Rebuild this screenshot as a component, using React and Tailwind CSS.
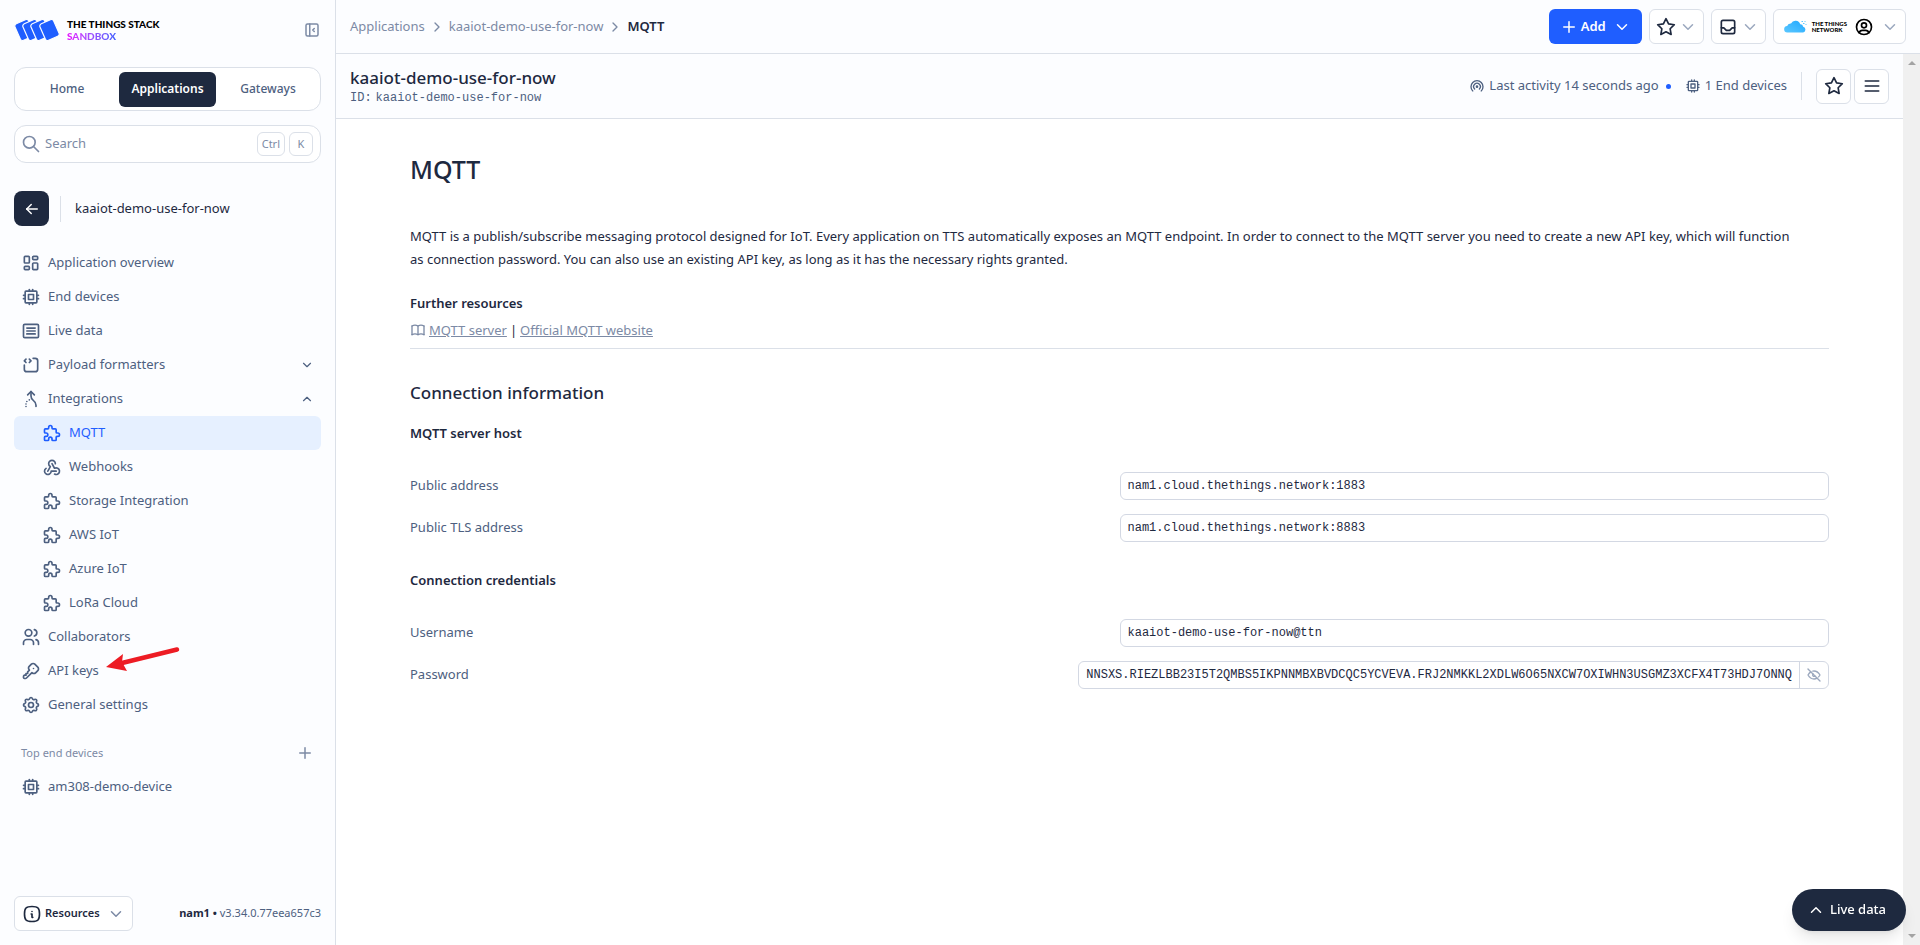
import {
  TbArrowLeft,
  TbArrowMergeAltRight,
  TbBook,
  TbBroadcast,
  TbChevronDown,
  TbChevronRight,
  TbChevronUp,
  TbCpu,
  TbEyeOff,
  TbInbox,
  TbInfoSquareRounded,
  TbKey,
  TbLayoutDashboard,
  TbLayoutSidebarLeftCollapse,
  TbMenu2,
  TbPlus,
  TbPuzzle,
  TbSearch,
  TbSettings,
  TbSourceCode,
  TbStar,
  TbUserCircle,
  TbUsers,
  TbWebhook,
} from "react-icons/tb";
import clsx from "clsx";

const integrations = [
  { label: "MQTT", icon: TbPuzzle, active: true },
  { label: "Webhooks", icon: TbWebhook },
  { label: "Storage Integration", icon: TbPuzzle },
  { label: "AWS IoT", icon: TbPuzzle },
  { label: "Azure IoT", icon: TbPuzzle },
  { label: "LoRa Cloud", icon: TbPuzzle },
];

function LiveDataIcon({ className }) {
  return (
    <svg
      viewBox="0 0 24 24"
      className={className}
      fill="none"
      stroke="currentColor"
      strokeWidth="2"
      strokeLinecap="round"
      strokeLinejoin="round"
    >
      <rect x="3" y="4" width="18" height="16" rx="1.500" />
      <path d="M7 8.500h10M7 12h10M7 15.500h10" />
    </svg>
  );
}

function StackLogo() {
  return (
    <svg viewBox="0 0 46 22" className="h-[22px] w-[46px] shrink-0">
      {[10.5, 18.5, 26.5, 35.5].map((x) => (
        <rect
          key={x}
          x={x - 7.5}
          y="2"
          width="15"
          height="18"
          rx="2.500"
          transform={`rotate(-24 ${x} 11)`}
          fill="#1f5eff"
          stroke="#fcfdff"
          strokeWidth="1.200"
        />
      ))}
    </svg>
  );
}

function NavItem({ icon: Icon, label, active, sub, expander: Expander }) {
  return (
    <a
      href="#"
      className={clsx(
        "flex h-[34px] items-center gap-[7px] rounded-md pr-[7px] text-[13px]",
        sub ? "pl-7" : "pl-[7px]",
        active ? "bg-[#e6f0ff] text-[#1f5eff]" : "text-[#4d6080]"
      )}
    >
      <Icon className="size-5 shrink-0" />
      <span className="grow">{label}</span>
      {Expander && <Expander className="size-3.5" />}
    </a>
  );
}

function SideBar() {
  return (
    <aside className="flex w-[336px] shrink-0 flex-col border-r border-[#dbe0e8] bg-[#fcfdff] px-3.5 pb-3.5">
      <div className="flex h-[55px] items-center justify-between pt-1">
        <a href="#" className="flex items-center gap-[7px]">
          <StackLogo />
          <span className="flex flex-col font-[Lato] text-[10px] leading-3 font-black text-black">
            <span>THE THINGS STACK</span>
            <span className="w-fit bg-linear-to-r from-[#e600ff] to-[#3d5eff] bg-clip-text text-transparent">
              SANDBOX
            </span>
          </span>
        </a>
        <button type="button" aria-label="Collapse sidebar" className="text-[#7c8aa5]">
          <TbLayoutSidebarLeftCollapse className="size-[18px]" />
        </button>
      </div>

      <nav className="mt-3 flex h-11 items-center rounded-xl border border-[#dbe0e8] bg-white text-xs font-medium text-[#4d6080]">
        <a href="#" className="flex-1 text-center">
          Home
        </a>
        <a
          href="#"
          className="flex h-[35px] w-[97px] items-center justify-center rounded-md bg-[#1e293f] font-semibold text-white"
        >
          Applications
        </a>
        <a href="#" className="flex-1 text-center">
          Gateways
        </a>
      </nav>

      <label className="mt-3.5 flex h-[38px] items-center gap-1 rounded-xl border border-[#dbe0e8] bg-white pr-[7px] pl-1.5 text-[#7c8aa5]">
        <TbSearch className="size-5 shrink-0" />
        <input
          type="text"
          placeholder="Search"
          className="w-full min-w-0 bg-transparent text-[13px] outline-none placeholder:text-[#7c8aa5]"
        />
        <kbd className="flex h-6 shrink-0 items-center rounded-md border border-[#dbe0e8] px-1 font-[inherit] text-[11px]">
          Ctrl
        </kbd>
        <kbd className="flex size-6 shrink-0 items-center justify-center rounded-md border border-[#dbe0e8] font-[inherit] text-[11px]">
          K
        </kbd>
      </label>

      <div className="mt-7 mb-5 flex items-center">
        <button
          type="button"
          aria-label="Back"
          className="flex size-[35px] items-center justify-center rounded-lg bg-[#1e293f] text-white"
        >
          <TbArrowLeft className="size-[18px]" />
        </button>
        <span className="mr-3.5 ml-[11px] h-[26px] w-px bg-[#dbe0e8]" />
        <span className="text-[13px] text-[#1e293f]">kaaiot-demo-use-for-now</span>
      </div>

      <nav>
        <NavItem icon={TbLayoutDashboard} label="Application overview" />
        <NavItem icon={TbCpu} label="End devices" />
        <NavItem icon={LiveDataIcon} label="Live data" />
        <NavItem icon={TbSourceCode} label="Payload formatters" expander={TbChevronDown} />
        <NavItem icon={TbArrowMergeAltRight} label="Integrations" expander={TbChevronUp} />
        {integrations.map((item) => (
          <NavItem key={item.label} sub {...item} />
        ))}
        <NavItem icon={TbUsers} label="Collaborators" />
        <div className="relative">
          <NavItem icon={TbKey} label="API keys" />
          {/* pointer to the API keys entry */}
          <svg viewBox="0 0 74 26" className="absolute -top-2 left-[92px] h-[26px] w-[74px]">
            <path d="M71 3.500L16 17" stroke="#ed1c24" strokeWidth="4.500" strokeLinecap="round" />
            <path d="M0 21L17 8L16 16L21 25Z" fill="#ed1c24" />
          </svg>
        </div>
        <NavItem icon={TbSettings} label="General settings" />
      </nav>

      <div className="mt-3.5 flex h-[34px] items-center justify-between px-[7px] text-[#7c8aa5]">
        <span className="text-[11px]">Top end devices</span>
        <button type="button" aria-label="Add end device">
          <TbPlus className="size-[18px]" />
        </button>
      </div>
      <NavItem icon={TbCpu} label="am308-demo-device" />

      <div className="mt-auto flex items-center justify-between text-[11px]">
        <button
          type="button"
          className="flex h-[35px] items-center gap-[3px] rounded-md border border-[#dbe0e8] bg-white px-[7px] font-semibold text-[#1e293f]"
        >
          <TbInfoSquareRounded className="size-5" />
          Resources
          <TbChevronDown className="ml-1 size-[18px] text-[#7c8aa5]" />
        </button>
        <span className="text-[#4d6080]">
          <b className="text-[#1e293f]">nam1 • </b>v3.34.0.77eea657c3
        </span>
      </div>
    </aside>
  );
}

function NetworkLogo() {
  return (
    <span className="flex items-center gap-[5px]">
      <svg viewBox="0 0 23 13" className="h-[13px] w-[23px]">
        <defs>
          <linearGradient id="cloud" x1="0" y1="1" x2="1" y2="0">
            <stop offset="0" stopColor="#5cc8ff" />
            <stop offset="1" stopColor="#1fa8ff" />
          </linearGradient>
        </defs>
        <path
          d="M3.500 12.500a3.200 3.200 0 0 1 -.3 -6.400a3.500 3.500 0 0 1 3.800 -2.600a5 5 0 0 1 9.200 .8a3 3 0 0 1 3 2.400a3 3 0 0 1 0 5.800z"
          fill="url(#cloud)"
        />
        <path d="M17.500 1.500h1.500M20.500 1.500h1M19 3.500h1.500M21.500 4.500h1" stroke="#5cc8ff" />
      </svg>
      <span className="flex flex-col text-left font-[Lato] text-[6px] leading-[6px] font-black text-black">
        <span>THE THINGS</span>
        <span>NETWORK</span>
      </span>
    </span>
  );
}

function TopBar() {
  const button =
    "flex h-[35px] items-center gap-[3px] rounded-md border border-[#dbe0e8] bg-white px-1.5 text-[#1e293f]";
  return (
    <header className="flex h-[54px] shrink-0 items-center justify-between border-b border-[#dbe0e8] bg-[#fcfdff] px-3.5">
      <nav className="flex items-center gap-1 text-[13px] text-[#7c8aa5]">
        <a href="#">Applications</a>
        <TbChevronRight className="size-4" />
        <a href="#">kaaiot-demo-use-for-now</a>
        <TbChevronRight className="size-4" />
        <span className="font-semibold text-[#1e293f]">MQTT</span>
      </nav>
      <div className="flex gap-[7px]">
        <button
          type="button"
          className="flex h-[35px] items-center gap-[3px] rounded-md bg-[#1f5eff] px-[11px] text-[13px] font-semibold text-white"
        >
          <TbPlus className="size-[18px]" />
          Add
          <TbChevronDown className="ml-1 size-[18px]" />
        </button>
        <button type="button" aria-label="Bookmarks" className={button}>
          <TbStar className="size-5" />
          <TbChevronDown className="size-[18px] text-[#9ba8be]" />
        </button>
        <button type="button" aria-label="Notifications" className={button}>
          <TbInbox className="size-5" />
          <TbChevronDown className="size-[18px] text-[#9ba8be]" />
        </button>
        <button
          type="button"
          aria-label="Profile"
          className="flex h-[35px] items-center gap-[7px] rounded-md border border-[#dbe0e8] bg-white pr-1.5 pl-2.5"
        >
          <NetworkLogo />
          <TbUserCircle className="size-5 text-black" />
          <TbChevronDown className="size-[18px] text-[#9ba8be]" />
        </button>
      </div>
    </header>
  );
}

function EntityHeader() {
  const button =
    "flex size-[35px] items-center justify-center rounded-md border border-[#dbe0e8] bg-white text-[#1e293f]";
  return (
    <div className="flex h-[65px] items-center justify-between border-b border-[#dbe0e8] bg-[#fcfdff] px-3.5">
      <div>
        <h2 className="text-[17px] leading-6 font-medium text-[#1e293f]">
          kaaiot-demo-use-for-now
        </h2>
        <p className="font-['Liberation_Mono',monospace] text-xs text-[#4d6080]">
          <span className="mr-1">ID:</span>
          kaaiot-demo-use-for-now
        </p>
      </div>
      <div className="flex items-center text-[13px] text-[#4d6080]">
        <TbBroadcast className="mr-1 size-4" />
        Last activity 14 seconds ago
        <span className="mr-3.5 ml-[7px] size-[5px] rounded-full bg-[#1f5eff]" />
        <TbCpu className="mr-1 size-4" />1 End devices
        <span className="mx-3.5 h-7 w-px bg-[#dbe0e8]" />
        <div className="flex gap-[3px]">
          <button type="button" aria-label="Bookmark" className={button}>
            <TbStar className="size-5" />
          </button>
          <button type="button" aria-label="Menu" className={button}>
            <TbMenu2 className="size-5" />
          </button>
        </div>
      </div>
    </div>
  );
}

function Field({ id, label, value, hidable }) {
  return (
    <div className="flex h-[42px] items-center justify-between text-[#4d6080]">
      <label htmlFor={id}>{label}</label>
      <div className="flex h-7 w-1/2 min-w-fit rounded-md border border-[#d3d8e3] bg-white">
        <input
          id={id}
          type="text"
          readOnly
          value={value}
          className="field-sizing-content grow bg-transparent px-[7px] font-['Liberation_Mono',monospace] text-xs text-[#1e293f] outline-none"
        />
        {hidable && (
          <button
            type="button"
            aria-label="Hide password"
            className="flex w-[29px] items-center justify-center border-l border-[#d3d8e3] text-[#9ba8be]"
          >
            <TbEyeOff className="size-4" />
          </button>
        )}
      </div>
    </div>
  );
}

function MqttPage() {
  return (
    <main className="px-[74px] text-[13px] text-[#1e293f]">
      <h1 className="mt-[30px] text-[25px] leading-10 font-medium">MQTT</h1>
      <p className="mt-9 pr-6 leading-[23px]">
        MQTT is a publish/subscribe messaging protocol designed for IoT. Every application on TTS
        automatically exposes an MQTT endpoint. In order to connect to the MQTT server you need to
        create a new API key, which will function as connection password. You can also use an
        existing API key, as long as it has the necessary rights granted.
      </p>
      <h4 className="mt-5 leading-6 font-semibold">Further resources</h4>
      <div className="mt-[3px] flex items-center gap-[3px] border-b border-[#dbe0e8] pb-1.5 leading-6">
        <TbBook className="size-4 text-[#7c8aa5]" />
        <a href="#" className="text-[#7c8aa5] underline">
          MQTT server
        </a>
        |
        <a href="#" className="text-[#7c8aa5] underline">
          Official MQTT website
        </a>
      </div>
      <h3 className="mt-8 text-[17px] leading-6 font-medium">Connection information</h3>
      <h4 className="mt-4 mb-5 leading-6 font-semibold">MQTT server host</h4>
      <Field id="address" label="Public address" value="nam1.cloud.thethings.network:1883" />
      <Field id="tls" label="Public TLS address" value="nam1.cloud.thethings.network:8883" />
      <h4 className="mt-[19px] mb-5 leading-6 font-semibold">Connection credentials</h4>
      <Field id="username" label="Username" value="kaaiot-demo-use-for-now@ttn" />
      <Field
        id="password"
        label="Password"
        value="NNSXS.RIEZLBB23I5T2QMBS5IKPNNMBXBVDCQC5YCVEVA.FRJ2NMKKL2XDLW6O65NXCW7OXIWHN3USGMZ3XCFX4T73HDJ7ONNQ"
        hidable
      />
    </main>
  );
}

function ScrollTrack() {
  return (
    <div className="flex w-[17px] shrink-0 flex-col items-center justify-between bg-[#f0f0f0] py-1.5">
      <svg viewBox="0 0 8 6" className="h-1.5 w-2">
        <path d="M0 5L4 1L8 5Z" fill="#a3a3a3" />
      </svg>
      <svg viewBox="0 0 8 6" className="h-1.5 w-2">
        <path d="M0 1L4 5L8 1Z" fill="#a3a3a3" />
      </svg>
    </div>
  );
}

function App() {
  return (
    <div className="flex h-screen bg-white font-['Noto_Sans','Open_Sans',sans-serif]">
      <SideBar />
      <div className="flex min-w-0 grow flex-col">
        <TopBar />
        <div className="flex min-h-0 grow">
          <div className="min-w-0 grow">
            <EntityHeader />
            <MqttPage />
          </div>
          <ScrollTrack />
        </div>
      </div>
      <button
        type="button"
        className="fixed right-3.5 bottom-3.5 flex h-[42px] items-center gap-[5px] rounded-full bg-[#1e293f] pr-5 pl-[15px] text-[13px] font-medium text-white shadow-lg"
      >
        <TbChevronUp className="size-[18px]" />
        Live data
      </button>
    </div>
  );
}

export default App;
